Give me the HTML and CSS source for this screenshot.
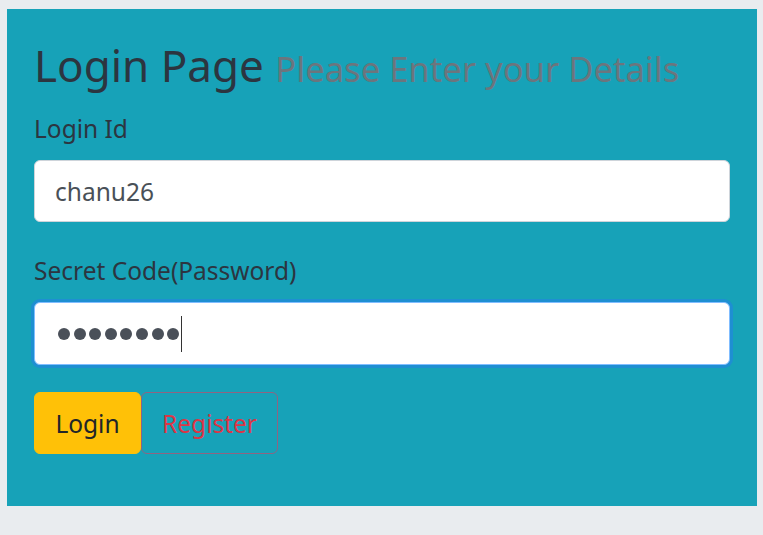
FILE: index.html
```html
<!DOCTYPE html>
<html>
<head>
<meta charset="utf-8">
<link rel="stylesheet" href="styles.css">
</head>
<body>
<div class="panel">
  <h1 class="title">Login Page <small class="muted">Please Enter your Details</small></h1>
  <div class="group">
    <label class="label">Login Id</label>
    <div class="field">chanu26</div>
  </div>
  <div class="group">
    <label class="label">Secret Code(Password)</label>
    <div class="field focused">
      <span class="dots"><i></i><i></i><i></i><i></i><i></i><i></i><i></i><i></i></span><span class="caret"></span>
    </div>
  </div>
  <div class="actions">
    <button class="btn btn-login">Login</button><button class="btn btn-register">Register</button>
  </div>
</div>
</body>
</html>
```
FILE: styles.css
```css
html, body { margin: 0; padding: 0; }
body {
  background: #e9ecef;
  font-family: "Noto Sans", "Open Sans", sans-serif;
  color: #343a40;
  width: 763px;
  height: 535px;
  overflow: hidden;
}
.panel {
  margin: 9px 6px 0 7px;
  height: 497px;
  box-sizing: border-box;
  background: #17a2b8;
  padding: 16px 27px 0 27px;
}
.title {
  margin: 0 0 3px;
  font-weight: 400;
  font-size: 44px;
  line-height: 80px;
  color: #2c3540;
  white-space: nowrap;
}
.muted {
  font-size: 34.6px;
  color: #6c757d;
}
.label {
  display: block;
  font-size: 24.5px;
  line-height: 34px;
  margin-bottom: 14px;
  color: #2c3540;
}
.field {
  height: 62px;
  box-sizing: border-box;
  background: #fff;
  border: 1px solid #ced4da;
  border-radius: 6px;
  padding: 0 20px;
  display: flex;
  align-items: center;
  font-size: 24.5px;
  color: #495057;
  margin-bottom: 32px;
}
.field.focused {
  height: 63px;
  border: 1px solid #80bdff;
  box-shadow: 0 0 0 3px #1e8fd2;
  margin-bottom: 27px;
  padding-left: 23px;
}
.dots {
  display: flex;
  gap: 3.6px;
}
.dots i {
  display: block;
  width: 12px;
  height: 12px;
  border-radius: 50%;
  background: #4a5059;
}
.caret {
  display: inline-block;
  width: 1px;
  height: 36px;
  background: #333;
  margin-left: 2px;
}
.actions { display: flex; }
.btn {
  height: 62px;
  box-sizing: border-box;
  font-family: inherit;
  font-size: 24.5px;
  padding: 0;
  border-radius: 6px;
  cursor: pointer;
}
.btn-login {
  background: #ffc107;
  border: 1px solid #ffc107;
  color: #212529;
  width: 107px;
}
.btn-register {
  background: transparent;
  border: 1px solid #8f6482;
  color: #dc3545;
  width: 137px;
}
```
